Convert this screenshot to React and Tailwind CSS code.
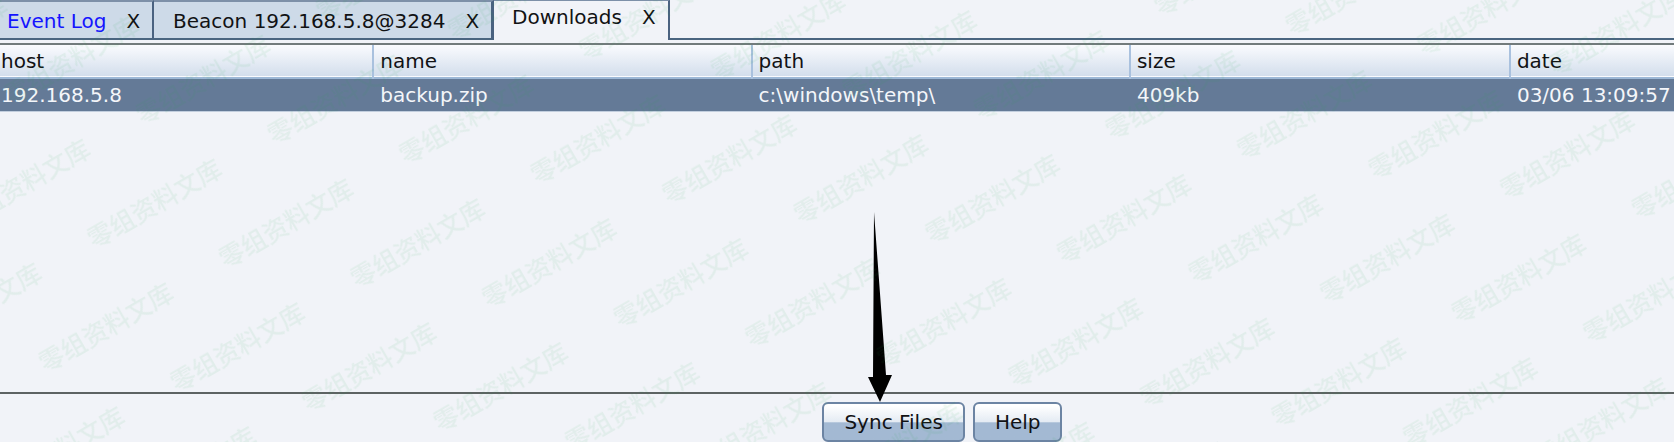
const tabs = [
  { label: 'Event Log', tone: 'text-[#1414ff]', pad: 'pl-[7px] pr-3 border-r-2' },
  { label: 'Beacon 192.168.5.8@3284', tone: 'text-[#111214]', pad: 'pl-[19px] pr-3 border-r-3' },
]

const columns = [
  { name: 'host', value: '192.168.5.8', width: 'w-[22.3%]' },
  { name: 'name', value: 'backup.zip', width: 'w-[22.6%]' },
  { name: 'path', value: 'c:\\windows\\temp\\', width: 'w-[22.6%]' },
  { name: 'size', value: '409kb', width: 'w-[22.7%]' },
  { name: 'date', value: '03/06 13:09:57', width: '' },
]

function TabBar() {
  return (
    <nav className="flex h-10 items-stretch" aria-label="Sessions">
      {tabs.map((tab) => (
        <div
          key={tab.label}
          className={`flex items-center gap-5 border-t-2 border-b-2 border-t-[#7d90a8] border-r-[#4a6280] border-b-[#4a6580] bg-[#cddae8] pt-px ${tab.pad}`}
        >
          <button type="button" className={`leading-6 ${tab.tone}`}>{tab.label}</button>
          <button type="button" aria-label={`Close ${tab.label}`} className="leading-6">X</button>
        </div>
      ))}
      <div className="flex items-start gap-5 border-t border-r-2 border-t-[#7d90a8] border-r-[#4a6280] pt-1 pr-3 pl-[18px]">
        <button type="button" className="leading-6">Downloads</button>
        <button type="button" aria-label="Close Downloads" className="leading-6">X</button>
      </div>
      <div className="flex-1 border-b-2 border-[#4a6580]" />
    </nav>
  )
}

function DownloadsTable() {
  return (
    <table className="w-full table-fixed border-collapse text-left">
      <thead>
        <tr className="h-[33px] border-b-2 border-[#9db8d6] bg-linear-to-b from-[#fafbfe] to-[#d3deec]">
          {columns.map((c, i) => (
            <th key={c.name} className={`p-0 font-normal leading-6 ${c.width} ${i ? 'border-l-2 border-[#a9c1de] pl-1.5' : 'pl-px'}`}>
              {c.name}
            </th>
          ))}
        </tr>
      </thead>
      <tbody>
        <tr className="h-[33px] border-b border-[#c2cede] bg-[#647a97] text-[#f4f6fa]">
          {columns.map((c, i) => (
            <td key={c.name} className={`whitespace-nowrap p-0 pt-px leading-6 ${i ? 'pl-[7px]' : 'pl-px'}`}>{c.value}</td>
          ))}
        </tr>
      </tbody>
    </table>
  )
}

function ActionButton({ children }) {
  return (
    <button
      type="button"
      className="h-10 rounded-md border-2 border-[#6c84a3] bg-linear-to-b from-white from-5% via-[#e4ebf3] via-50% to-[#a3b9d3] to-52% px-5 leading-6"
    >
      {children}
    </button>
  )
}

function Watermark() {
  return (
    <svg className="pointer-events-none absolute inset-0 size-full" aria-hidden="true">
      <defs>
        <pattern id="mark" width="208" height="166" patternUnits="userSpaceOnUse" patternTransform="rotate(-30) translate(-60 -50)">
          <g fill="#1f9a45" fillOpacity="0.075" fontSize="25" fontWeight="500" fontFamily="'Noto Sans CJK SC', sans-serif">
            <text x="17" y="147">零组资料文库</text>
            <text x="121" y="64">零组资料文库</text>
            <text x="-87" y="64">零组资料文库</text>
          </g>
        </pattern>
      </defs>
      <rect width="100%" height="100%" fill="url(#mark)" />
    </svg>
  )
}

export default function App() {
  return (
    <main className="relative flex h-screen flex-col overflow-hidden bg-[#f1f3f8] font-['DejaVu_Sans',sans-serif] text-[20px] text-[#111214]">
      <TabBar />
      <section className="mt-[3px] flex-1 border-t-2 border-b-2 border-t-[#727b7c] border-b-[#5d6363]">
        <DownloadsTable />
      </section>
      <footer className="flex h-12 justify-center gap-2 pt-2 pl-[12.6%]">
        <div className="relative">
          <ActionButton>Sync Files</ActionButton>
          <svg className="absolute bottom-full left-[45px] h-[190px] w-[26px]" viewBox="0 0 26 190" aria-hidden="true">
            <path d="M7 0 L19 163 L25 163 L13 190 L1 165 L6 165 Z" fill="#000" />
          </svg>
        </div>
        <ActionButton>Help</ActionButton>
      </footer>
      <Watermark />
    </main>
  )
}
